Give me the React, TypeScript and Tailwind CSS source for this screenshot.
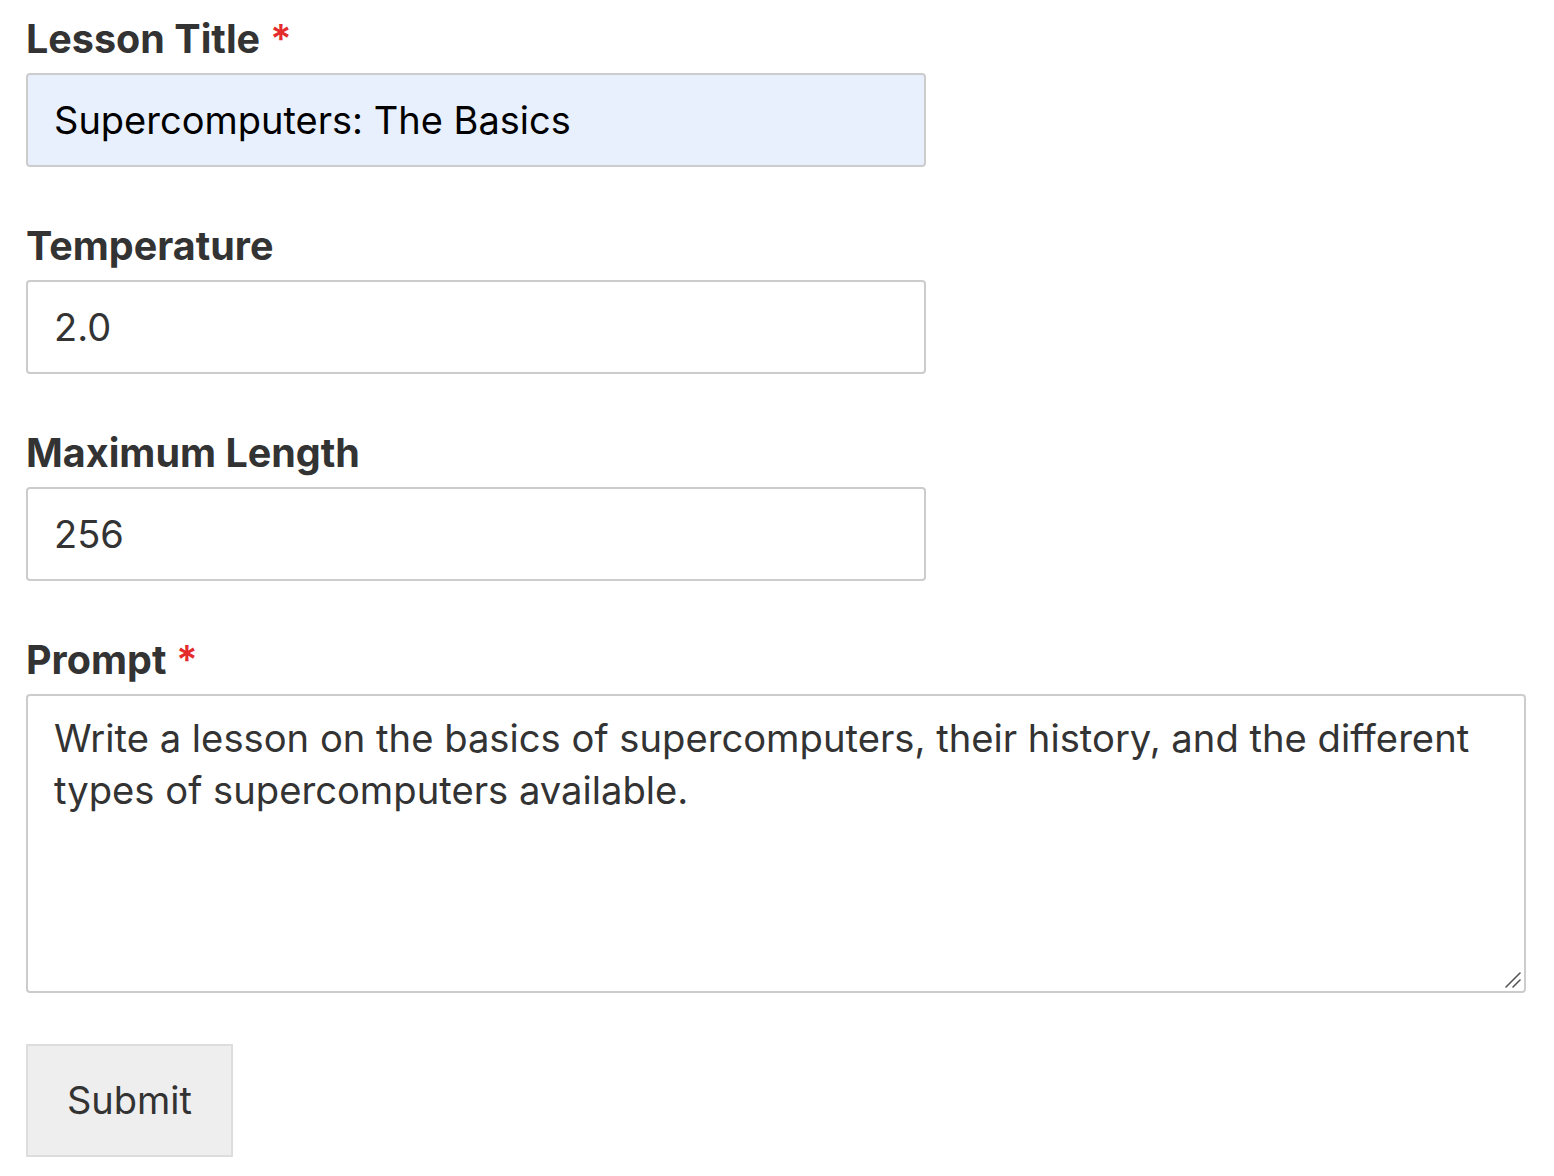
import React from "react";

const font = { fontFamily: "Inter, 'Noto Sans', sans-serif" };

function Label({ children, required }: { children: React.ReactNode; required?: boolean }) {
  return (
    <label className="block text-[39.5px] leading-[48px] font-bold text-[#333333] mb-[10px]">
      {children}
      {required && <span className="text-[#e32c2b] font-semibold ml-[10px]">*</span>}
    </label>
  );
}

export default function App() {
  return (
    <div className="min-h-[1176px] bg-white pl-[26px] pt-[15px]" style={font}>
      <div className="mb-[55px]">
        <Label required>Lesson Title</Label>
        <input
          defaultValue="Supercomputers: The Basics"
          className="block w-[900px] h-[94px] border-2 border-[#cccccc] rounded-[4px] bg-[#e8f0fe] px-[26px] text-[38px] text-black outline-none"
        />
      </div>
      <div className="mb-[55px]">
        <Label>Temperature</Label>
        <input
          defaultValue="2.0"
          className="block w-[900px] h-[94px] border-2 border-[#cccccc] rounded-[4px] bg-white px-[26px] text-[38px] text-[#333333] outline-none"
        />
      </div>
      <div className="mb-[55px]">
        <Label>Maximum Length</Label>
        <input
          defaultValue="256"
          className="block w-[900px] h-[94px] border-2 border-[#cccccc] rounded-[4px] bg-white px-[26px] text-[38px] text-[#333333] outline-none"
        />
      </div>
      <div className="mb-[51px]">
        <Label required>Prompt</Label>
        <div className="relative w-[1500px] h-[299px]">
          <textarea
            defaultValue="Write a lesson on the basics of supercomputers, their history, and the different types of supercomputers available."
            className="block w-full h-full resize-none border-2 border-[#cccccc] rounded-[4px] bg-white px-[26px] py-[16px] text-[38.2px] leading-[52px] text-[#333333] outline-none"
          />
          <svg className="absolute right-[4px] bottom-[4px] pointer-events-none" width="18" height="18" viewBox="0 0 18 18">
            <line x1="2" y1="16" x2="16" y2="2" stroke="#555555" strokeWidth="1.6" strokeLinecap="round" />
            <line x1="9" y1="16" x2="16" y2="9" stroke="#555555" strokeWidth="1.6" strokeLinecap="round" />
          </svg>
        </div>
      </div>
      <button className="block w-[207px] h-[113px] border-2 border-[#dddddd] bg-[#eeeeee] text-[38px] text-[#333333]">
        Submit
      </button>
    </div>
  );
}
